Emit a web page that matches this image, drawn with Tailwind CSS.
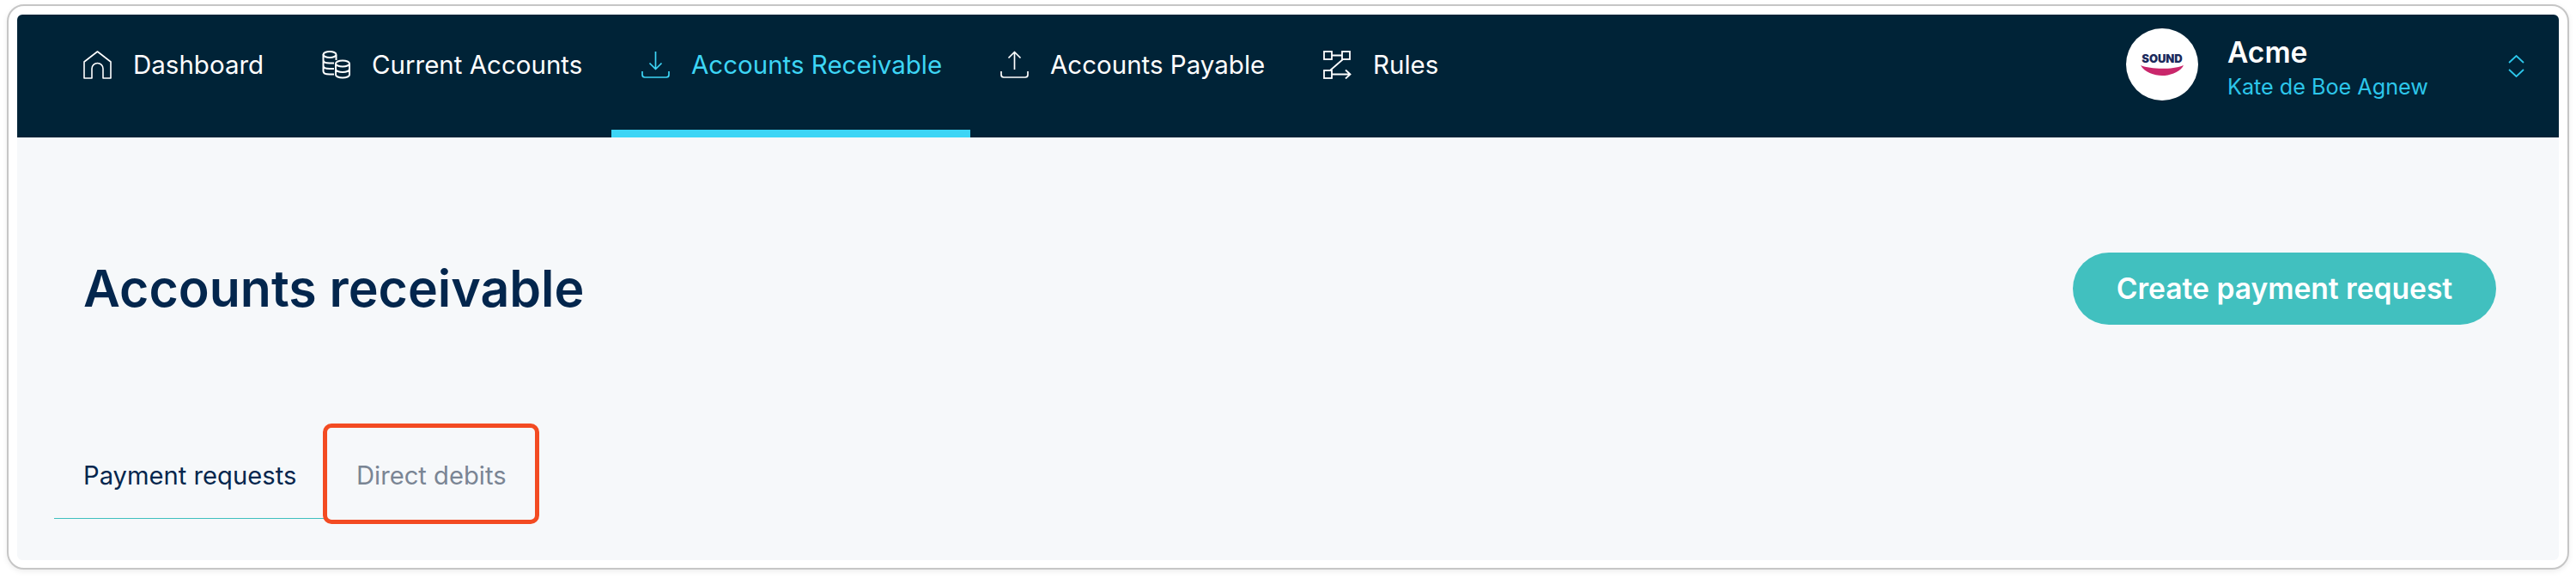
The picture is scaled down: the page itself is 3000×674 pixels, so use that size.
<!DOCTYPE html>
<html>
<head>
<meta charset="utf-8">
<script src="https://cdn.jsdelivr.net/npm/@tailwindcss/browser@4"></script>
</head>
<body class="bg-white font-['Inter',sans-serif]">
<div class="w-[3000px] h-[674px] overflow-hidden pt-[5px] pl-[8px]">
  <div class="w-[2984px] h-[658px] rounded-[20px] border-2 border-[#c6c6c6] bg-white p-[10px] shadow-[0_2px_6px_rgba(0,0,0,0.08)]">
    <div class="w-[2960px] h-[635px] flex flex-col rounded-[6px] overflow-hidden bg-[#f6f8fa]">
      <nav class="h-[143px] shrink-0 bg-[#002337] flex justify-between pl-[42px] pr-[40px]">
        <div class="flex h-full text-[29.500px] leading-[36px] text-white">
          <a class="w-[278px] flex gap-[25px] items-start pl-[35px] pt-[40px]">
            <svg class="w-[33px] h-[33px] mt-[2px] shrink-0" viewBox="0 0 33 33" fill="none" stroke="currentColor" stroke-width="1.6" stroke-linejoin="round"><path d="M1 13 16.500 1 32 13V32H23V21a6.500 6.500 0 0 0-13 0V32H1Z"/></svg>
            <span>Dashboard</span>
          </a>
          <a class="w-[372px] flex gap-[25px] items-start pl-[35px] pt-[40px]">
            <svg class="w-[33px] h-[33px] mt-[2px] shrink-0" viewBox="0 0 33 33" fill="none" stroke="currentColor" stroke-width="2"><ellipse cx="9" cy="4.500" rx="7.500" ry="3.500"/><path d="M1.500 4.500V24c0 2 3 3.500 7.500 3.500h5M1.500 11c0 2 3 3.500 7.500 3.500h5M1.500 17.500c0 2 3 3.500 7.500 3.500h5M16.500 5V11"/><ellipse cx="24" cy="15" rx="8" ry="3.500"/><path d="M16 15V28c0 2 3.500 3.500 8 3.500s8-1.500 8-3.500V15M16 21.500c0 2 3.500 3.500 8 3.500s8-1.500 8-3.500"/></svg>
            <span>Current Accounts</span>
          </a>
          <a class="w-[418px] flex gap-[25px] items-start pl-[35px] pt-[40px] border-b-[9px] border-[#3dd5f5] text-[#3dd5f5]">
            <svg class="w-[33px] h-[33px] mt-[2px] shrink-0" viewBox="0 0 33 33" fill="none" stroke="currentColor" stroke-width="1.7" stroke-linejoin="round"><path d="M16.500 1V21M9.500 14.500 16.500 21.500 23.500 14.500M1 24V28a3 3 0 0 0 3 3H29a3 3 0 0 0 3-3V24"/></svg>
            <span>Accounts Receivable</span>
          </a>
          <a class="w-[376px] flex gap-[25px] items-start pl-[35px] pt-[40px]">
            <svg class="w-[33px] h-[33px] mt-[2px] shrink-0" viewBox="0 0 33 33" fill="none" stroke="currentColor" stroke-width="1.7" stroke-linejoin="round"><path d="M16.500 22V2M9.500 8.500 16.500 1.500 23.500 8.500M1 24V28a3 3 0 0 0 3 3H29a3 3 0 0 0 3-3V24"/></svg>
            <span>Accounts Payable</span>
          </a>
          <a class="flex gap-[25px] items-start pl-[35px] pt-[40px]">
            <svg class="w-[33px] h-[33px] mt-[2px] shrink-0" viewBox="0 0 33 33" fill="none" stroke="currentColor" stroke-width="1.8"><rect x="1" y="1" width="9" height="9"/><rect x="22" y="1" width="9" height="9"/><rect x="1" y="23" width="9" height="9"/><path d="M10 5.500H22M23 10 8 23M10 27.500H31M26 22.500 31.500 27.500 26 32.500"/></svg>
            <span>Rules</span>
          </a>
        </div>
        <div class="flex items-start pt-[16px]">
          <div class="w-[84px] h-[84px] rounded-full bg-white flex flex-col items-center justify-center">
            <span class="text-[13px] leading-[13px] font-black text-[#1b2a5c]">SOUND</span>
            <svg class="w-[50px] h-[12px] mt-[1px]" viewBox="0 0 50 12"><path d="M0 0C12 5 38 5 50 0 46 8 34 12 25 12S4 8 0 0Z" fill="#c9276b"/></svg>
          </div>
          <div class="ml-[34px] w-[327px] pt-[8px]">
            <div class="text-[33.500px] leading-[40px] font-semibold text-white">Acme</div>
            <div class="text-[25.200px] leading-[32px] mt-[4px] text-[#2cc6ea]">Kate de Boe Agnew</div>
          </div>
          <svg class="w-[19px] h-[26px] mt-[31px]" viewBox="0 0 19 26" fill="none" stroke="#2cc6ea" stroke-width="1.800"><path d="M1 9 9.500 1 18 9M1 17 9.500 25 18 17"/></svg>
        </div>
      </nav>
      <main class="flex-1 flex flex-col">
        <div class="flex items-center justify-between pl-[77px] pr-[73px] pt-[134px]">
          <h1 class="text-[59px] leading-[84px] font-semibold text-[#03264d]">Accounts receivable</h1>
          <button class="w-[493px] h-[84px] rounded-full bg-[#41c0bf] text-white text-[33.600px] font-semibold">Create payment request</button>
        </div>
        <div class="relative flex ml-[43px] mt-[158px] text-[29.200px] leading-[36px] w-fit">
          <div class="w-[317px] pl-[34px] pb-[31px] border-b border-[#3fc0bf] text-[#03264d]">Payment requests</div>
          <div class="pl-[35px] text-[#7a8594]">Direct debits</div>
          <div class="absolute left-[313px] top-[-43px] w-[252px] h-[117px] rounded-[10px] border-[5px] border-[#f34b22]"></div>
        </div>
      </main>
    </div>
  </div>
</div>
</body>
</html>
